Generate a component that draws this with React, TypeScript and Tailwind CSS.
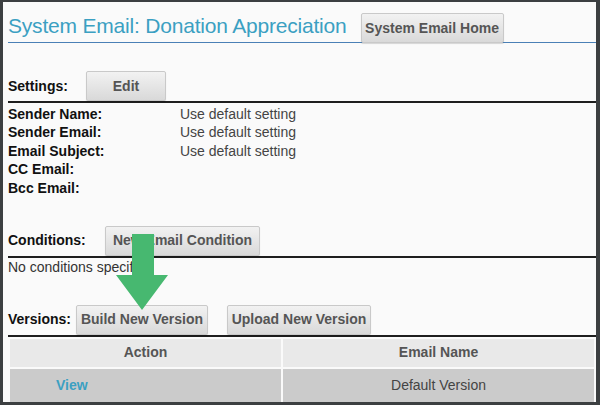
import React from 'react';

const font = { fontFamily: '"Liberation Sans", Arial, sans-serif' };

const GrayButton: React.FC<{ label: string; className?: string }> = ({ label, className = '' }) => (
  <button
    className={`h-[30px] rounded-[2px] border border-[#c9c9c9] bg-gradient-to-b from-[#f2f2f2] to-[#d9d9d9] text-[14px] font-bold text-[#555] shadow-[0_1px_1px_rgba(0,0,0,0.15)] ${className}`}
  >
    {label}
  </button>
);

const settings: [string, string][] = [
  ['Sender Name:', 'Use default setting'],
  ['Sender Email:', 'Use default setting'],
  ['Email Subject:', 'Use default setting'],
  ['CC Email:', ''],
  ['Bcc Email:', ''],
];

export default function App() {
  return (
    <div className="h-[405px] w-[600px] bg-[#3c3f41] pt-[2px] pl-[3px] pr-[4px] pb-[3px]" style={font}>
      <div className="relative h-full w-full overflow-hidden bg-[#fafafa] pl-[5px]">
        {/* Title */}
        <div className="flex h-[41px] items-end gap-[14px] border-b border-[#4a80b6]">
          <h1 className="mb-[6px] text-[21px] leading-none tracking-[-0.2px] text-[#3ba0c2]">
            System Email: Donation Appreciation
          </h1>
          <GrayButton label="System Email Home" className="mb-[-1px] w-[143px] text-[13px]" />
        </div>

        {/* Settings */}
        <div className="mt-[28px] box-content flex h-[30px] items-center border-b-2 border-[#1e1e1e]">
          <span className="w-[78px] text-[14px] font-bold text-[#111]">Settings:</span>
          <GrayButton label="Edit" className="w-[80px]" />
        </div>
        <div className="pt-[2px]">
          {settings.map(([k, v]) => (
            <div key={k} className="flex h-[18.5px] items-center text-[14px]">
              <span className="w-[172px] font-bold text-[#111]">{k}</span>
              <span className="text-[#444]">{v}</span>
            </div>
          ))}
        </div>

        {/* Conditions */}
        <div className="mt-[28px] box-content flex h-[30px] items-center border-b-2 border-[#1e1e1e]">
          <span className="w-[97px] text-[14px] font-bold text-[#111]">Conditions:</span>
          <GrayButton label="New Email Condition" className="w-[155px]" />
        </div>
        <div className="flex h-[20px] items-center text-[14px] text-[#333]">No conditions specified</div>

        {/* Versions */}
        <div className="mt-[27px] box-content flex h-[30px] items-center border-b-2 border-[#1e1e1e]">
          <span className="w-[68px] text-[14px] font-bold text-[#111]">Versions:</span>
          <GrayButton label="Build New Version" className="w-[132px]" />
          <GrayButton label="Upload New Version" className="ml-[19px] w-[144px]" />
        </div>

        <table className="w-full border-separate border-spacing-[2px] text-[14px]">
          <thead>
            <tr className="bg-[#e9e9e9]">
              <th className="h-[28px] w-[271px] text-center font-bold text-[#555]">Action</th>
              <th className="h-[28px] text-center font-bold text-[#555]">Email Name</th>
            </tr>
          </thead>
          <tbody>
            <tr className="bg-[#cbcbcb]">
              <td className="h-[33px] pl-[46px] font-bold text-[#3ba0c2]">View</td>
              <td className="h-[33px] text-center text-[#444]">Default Version</td>
            </tr>
          </tbody>
        </table>

        {/* Green arrow overlay */}
        <svg className="absolute left-[111px] top-[232px]" width="56" height="76" viewBox="0 0 56 76">
          <polygon points="18,0 40,0 40,41 54,41 28,76 2,41 18,41" fill="#47b870" />
        </svg>
      </div>
    </div>
  );
}
